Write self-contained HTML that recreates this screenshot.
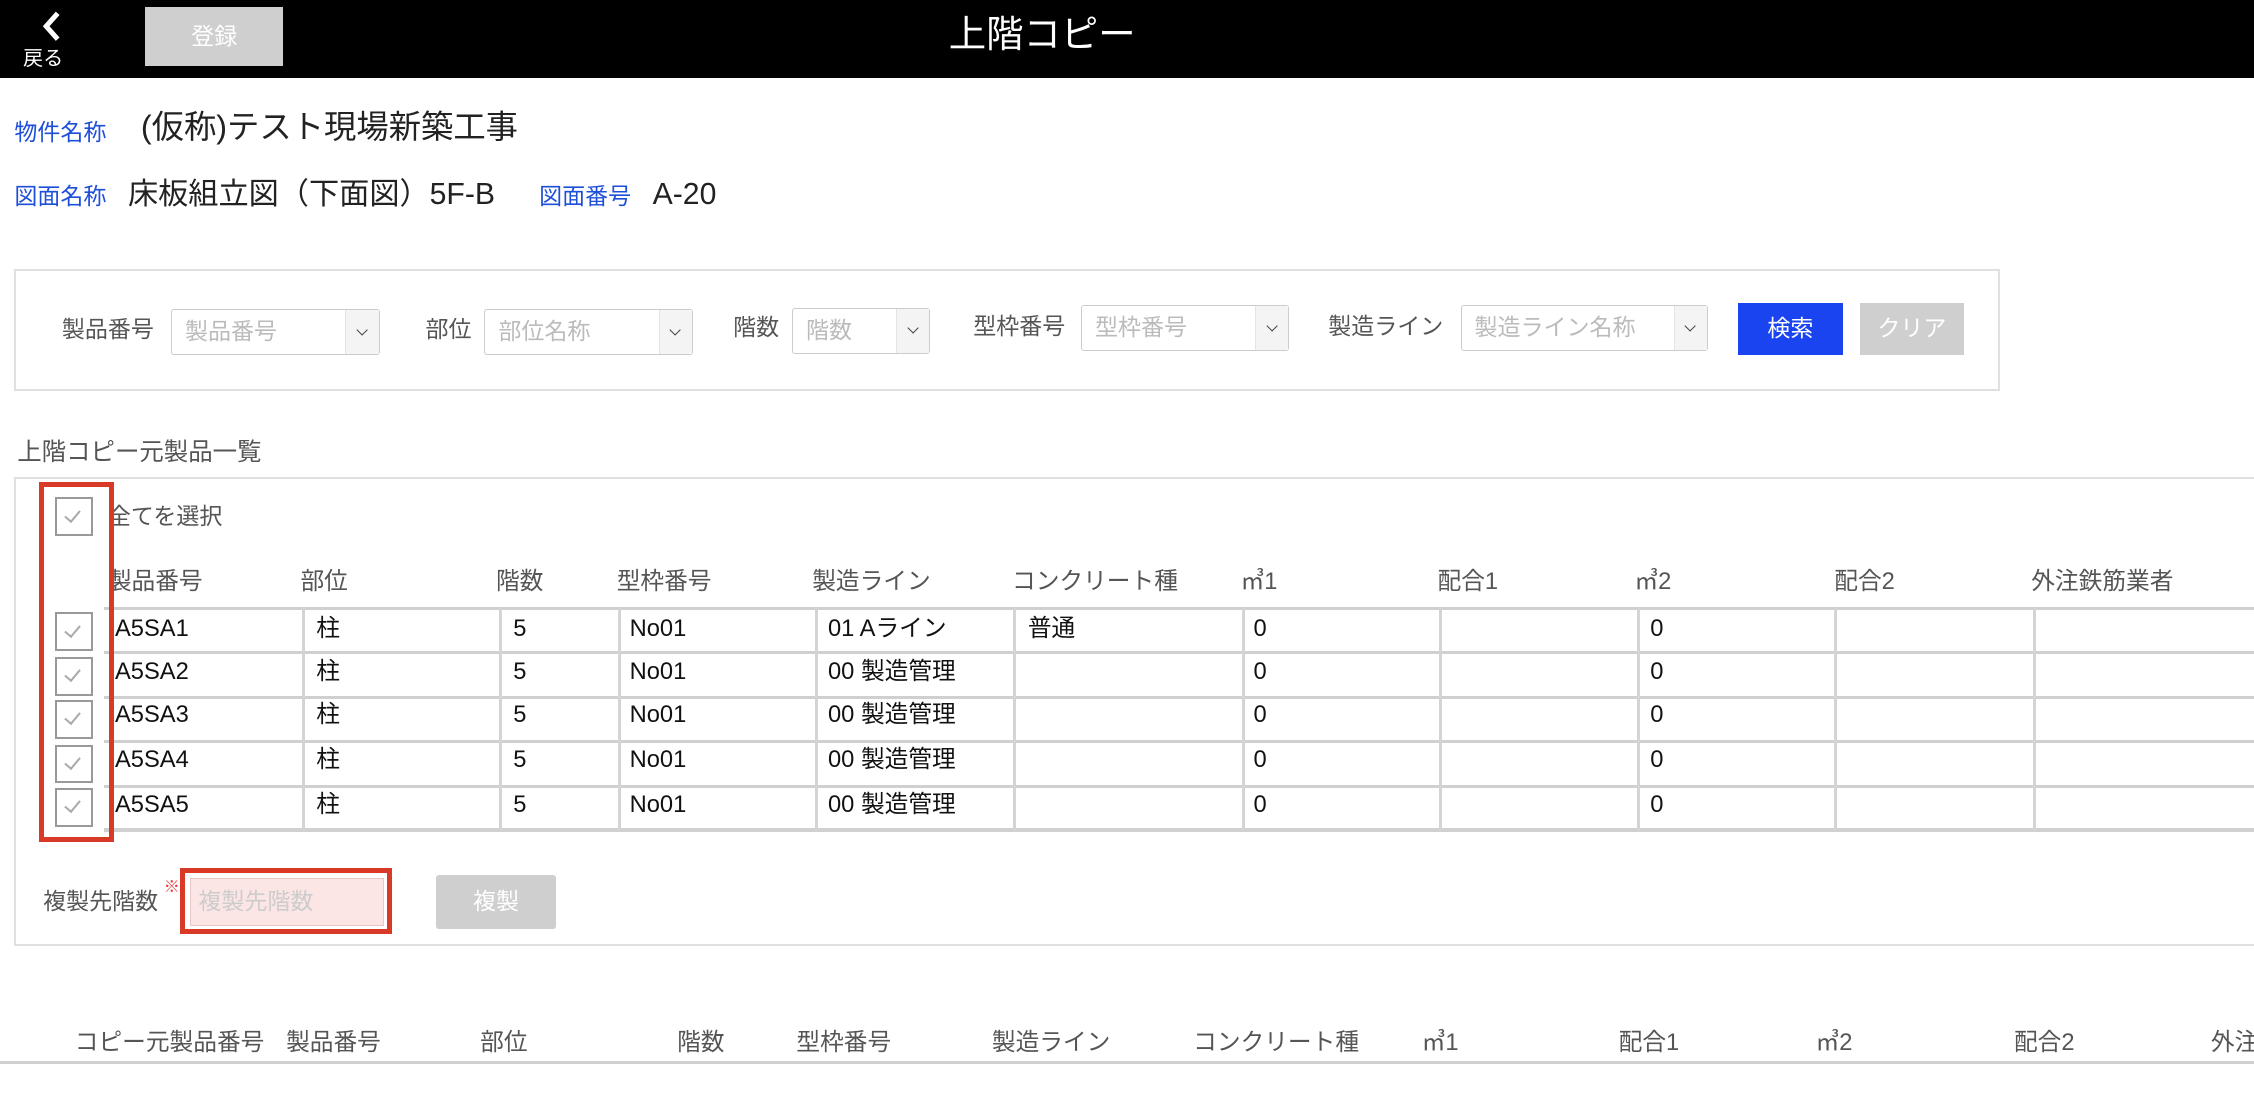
<!DOCTYPE html>
<html><head><meta charset="utf-8"><style>
*{margin:0;padding:0;box-sizing:border-box}
html,body{width:2254px;height:1110px;overflow:hidden;background:#fff}
#w{zoom:1.4375;width:1568px;height:772px;position:relative;font-family:"Liberation Sans","Noto Sans CJK JP",sans-serif;color:#222}
.a{position:absolute;white-space:nowrap;line-height:1}
.hd{position:absolute;left:0;top:0;width:1568px;height:54px;background:#000}
.lb{color:#1e4fd8;font-size:16px}
.g{color:#555}
.sel{position:absolute;height:32px;border:1px solid #ccc;border-radius:2px;background:#fff}
.sel span{position:absolute;left:9px;top:7px;font-size:16px;color:#bbb;line-height:1}
.sel i{position:absolute;right:0;top:0;bottom:0;width:23px;background:#f4f4f4;border-left:1px solid #e4e4e4}
.sel i:after{content:"";position:absolute;left:8px;top:11px;width:5px;height:5px;border-right:1.3px solid #444;border-bottom:1.3px solid #444;transform:rotate(45deg)}
.cb{position:absolute;left:38px;width:27px;height:27px;border:2px solid #999;background:#fff}
.cb:after{content:"";position:absolute;left:8px;top:5px;width:5px;height:9px;border-right:1.5px solid #aaa;border-bottom:1.5px solid #aaa;transform:rotate(40deg)}
.hl{position:absolute;left:72px;width:1496px;height:2px;background:#d0d0d0}
.vl{position:absolute;top:423px;width:2px;height:155px;background:#d4d4d4}
.t{font-size:16.5px;color:#111}
.h{font-size:16.5px;color:#555}
</style></head><body><div id="w">
<div class="hd"></div>
<svg class="a" style="left:27px;top:6px" width="18" height="24"><path d="M13 3 L5 12 L13 21" stroke="#fff" stroke-width="3.5" fill="none"/></svg>
<div class="a" style="left:16px;top:34px;font-size:14px;color:#fff">戻る</div>
<div class="a" style="left:101px;top:5px;width:96px;height:41px;background:#cfcfcf;color:#fff;font-size:16px;text-align:center;line-height:41px">登録</div>
<div class="a" style="left:660px;top:11px;font-size:26px;color:#fff">上階コピー</div>

<div class="a lb" style="left:10px;top:84px">物件名称</div>
<div class="a" style="left:98px;top:77px;font-size:22.5px">(仮称)テスト現場新築工事</div>
<div class="a lb" style="left:10px;top:129px">図面名称</div>
<div class="a" style="left:89px;top:125px;font-size:21px">床板組立図（下面図）5F-B</div>
<div class="a lb" style="left:375px;top:129px">図面番号</div>
<div class="a" style="left:454px;top:125px;font-size:21px">A-20</div>

<div class="a" style="left:10px;top:187px;width:1381px;height:85px;border:2px solid #e0e0e0"></div>
<div class="a g" style="left:43px;top:221px;font-size:16px">製品番号</div>
<div class="sel" style="left:119px;top:215px;width:145px"><span>製品番号</span><i></i></div>
<div class="a g" style="left:296px;top:221px;font-size:16px">部位</div>
<div class="sel" style="left:337px;top:215px;width:145px"><span>部位名称</span><i></i></div>
<div class="a g" style="left:510px;top:220px;font-size:16px">階数</div>
<div class="sel" style="left:551px;top:214px;width:96px"><span>階数</span><i></i></div>
<div class="a g" style="left:677px;top:219px;font-size:16px">型枠番号</div>
<div class="sel" style="left:752px;top:212px;width:145px"><span>型枠番号</span><i></i></div>
<div class="a g" style="left:924px;top:219px;font-size:16px">製造ライン</div>
<div class="sel" style="left:1016px;top:212px;width:172px"><span>製造ライン名称</span><i></i></div>
<div class="a" style="left:1209px;top:211px;width:73px;height:36px;background:#1a44f0;color:#fff;font-size:16px;text-align:center;line-height:36px">検索</div>
<div class="a" style="left:1294px;top:211px;width:72px;height:36px;background:#cfcfcf;color:#fff;font-size:16px;text-align:center;line-height:36px">クリア</div>

<div class="a g" style="left:12px;top:307px;font-size:17px">上階コピー元製品一覧</div>
<div class="a" style="left:10px;top:332px;width:1570px;height:326px;border:2px solid #e0e0e0"></div>

<div class="cb" style="top:346px"></div>
<div class="a g" style="left:75px;top:351px;font-size:16px">全てを選択</div>

<div class="a h" style="left:75px;top:397px">製品番号</div>
<div class="a h" style="left:209px;top:397px">部位</div>
<div class="a h" style="left:345px;top:397px">階数</div>
<div class="a h" style="left:429px;top:397px">型枠番号</div>
<div class="a h" style="left:565px;top:397px">製造ライン</div>
<div class="a h" style="left:704px;top:397px">コンクリート種</div>
<div class="a h" style="left:863px;top:397px">㎥1</div>
<div class="a h" style="left:1000px;top:397px">配合1</div>
<div class="a h" style="left:1137px;top:397px">㎥2</div>
<div class="a h" style="left:1276px;top:397px">配合2</div>
<div class="a h" style="left:1413px;top:397px">外注鉄筋業者</div>

<div class="hl" style="top:422px"></div>
<div class="hl" style="top:453px"></div>
<div class="hl" style="top:484px"></div>
<div class="hl" style="top:515px"></div>
<div class="hl" style="top:546px"></div>
<div class="hl" style="top:576px;height:3px"></div>
<div class="vl" style="left:210px"></div>
<div class="vl" style="left:347px"></div>
<div class="vl" style="left:430px"></div>
<div class="vl" style="left:567px"></div>
<div class="vl" style="left:705px"></div>
<div class="vl" style="left:864px"></div>
<div class="vl" style="left:1001px"></div>
<div class="vl" style="left:1139px"></div>
<div class="vl" style="left:1276px"></div>
<div class="vl" style="left:1414px"></div>

<div class="cb" style="top:426px"></div>
<div class="cb" style="top:457px"></div>
<div class="cb" style="top:487px"></div>
<div class="cb" style="top:518px"></div>
<div class="cb" style="top:548px"></div>

<div class="a t" style="left:80px;top:430px">A5SA1</div><div class="a t" style="left:220px;top:430px">柱</div><div class="a t" style="left:357px;top:430px">5</div><div class="a t" style="left:438px;top:430px">No01</div><div class="a t" style="left:576px;top:430px">01 Aライン</div><div class="a t" style="left:715px;top:430px">普通</div><div class="a t" style="left:872px;top:430px">0</div><div class="a t" style="left:1148px;top:430px">0</div>
<div class="a t" style="left:80px;top:460px">A5SA2</div><div class="a t" style="left:220px;top:460px">柱</div><div class="a t" style="left:357px;top:460px">5</div><div class="a t" style="left:438px;top:460px">No01</div><div class="a t" style="left:576px;top:460px">00 製造管理</div><div class="a t" style="left:872px;top:460px">0</div><div class="a t" style="left:1148px;top:460px">0</div>
<div class="a t" style="left:80px;top:490px">A5SA3</div><div class="a t" style="left:220px;top:490px">柱</div><div class="a t" style="left:357px;top:490px">5</div><div class="a t" style="left:438px;top:490px">No01</div><div class="a t" style="left:576px;top:490px">00 製造管理</div><div class="a t" style="left:872px;top:490px">0</div><div class="a t" style="left:1148px;top:490px">0</div>
<div class="a t" style="left:80px;top:521px">A5SA4</div><div class="a t" style="left:220px;top:521px">柱</div><div class="a t" style="left:357px;top:521px">5</div><div class="a t" style="left:438px;top:521px">No01</div><div class="a t" style="left:576px;top:521px">00 製造管理</div><div class="a t" style="left:872px;top:521px">0</div><div class="a t" style="left:1148px;top:521px">0</div>
<div class="a t" style="left:80px;top:552px">A5SA5</div><div class="a t" style="left:220px;top:552px">柱</div><div class="a t" style="left:357px;top:552px">5</div><div class="a t" style="left:438px;top:552px">No01</div><div class="a t" style="left:576px;top:552px">00 製造管理</div><div class="a t" style="left:872px;top:552px">0</div><div class="a t" style="left:1148px;top:552px">0</div>

<div class="a" style="left:27px;top:335px;width:52px;height:251px;border:4px solid #d93a28"></div>

<div class="a g" style="left:30px;top:619px;font-size:16px">複製先階数</div>
<div class="a" style="left:114px;top:612px;font-size:11px;color:#e33">※</div>
<div class="a" style="left:125px;top:604px;width:148px;height:46px;border:4px solid #d93a28"></div>
<div class="a" style="left:132px;top:611px;width:135px;height:33px;background:#fbe6e5;border:1px solid #e6c8c8"></div>
<div class="a" style="left:138px;top:619px;font-size:16px;color:#ccc">複製先階数</div>
<div class="a" style="left:303px;top:609px;width:84px;height:37px;background:#cfcfcf;border-radius:2px;color:#fff;font-size:16px;text-align:center;line-height:37px">複製</div>

<div class="a h" style="left:52px;top:718px">コピー元製品番号</div>
<div class="a h" style="left:199px;top:718px">製品番号</div>
<div class="a h" style="left:334px;top:718px">部位</div>
<div class="a h" style="left:471px;top:718px">階数</div>
<div class="a h" style="left:554px;top:718px">型枠番号</div>
<div class="a h" style="left:690px;top:718px">製造ライン</div>
<div class="a h" style="left:830px;top:718px">コンクリート種</div>
<div class="a h" style="left:989px;top:718px">㎥1</div>
<div class="a h" style="left:1126px;top:718px">配合1</div>
<div class="a h" style="left:1263px;top:718px">㎥2</div>
<div class="a h" style="left:1401px;top:718px">配合2</div>
<div class="a h" style="left:1538px;top:718px">外注</div>
<div class="a" style="left:0;top:738px;width:1568px;height:2px;background:#d0d0d0"></div>
</div></body></html>
